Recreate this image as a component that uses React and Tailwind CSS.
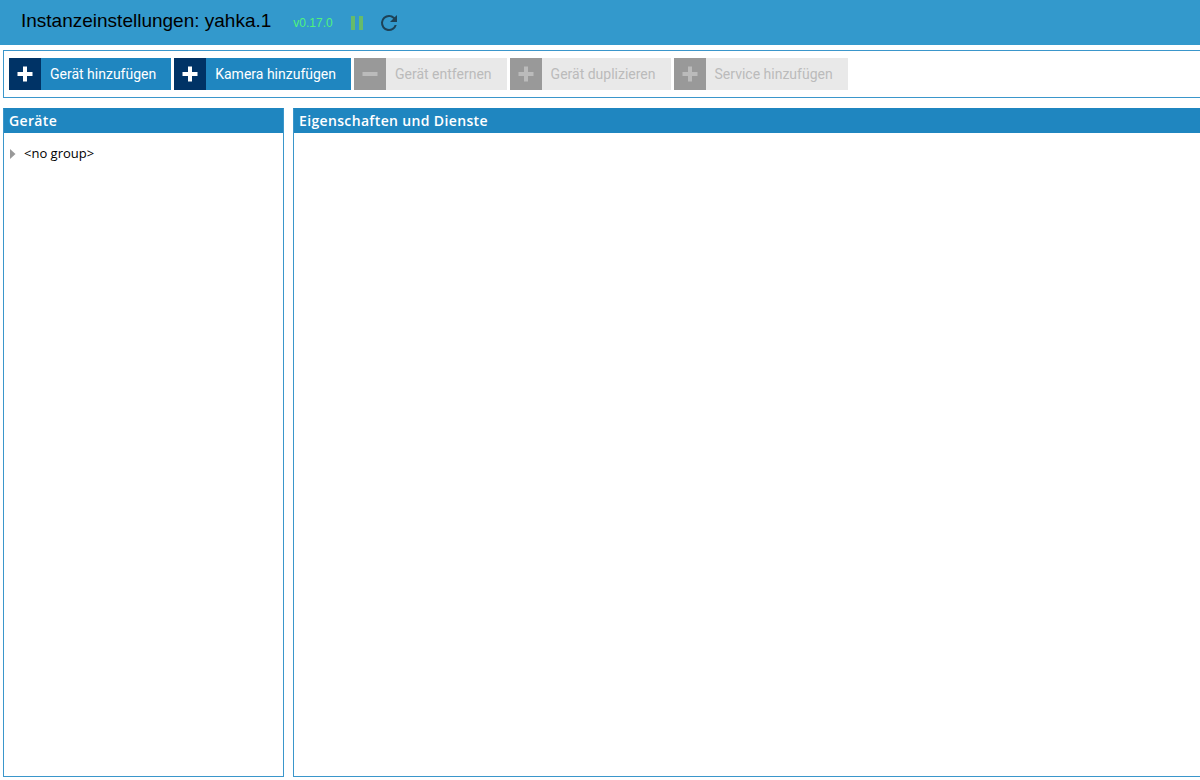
import React from "react";

const actions = [
  { label: "Gerät hinzufügen", icon: "plus", enabled: true },
  { label: "Kamera hinzufügen", icon: "plus", enabled: true },
  { label: "Gerät entfernen", icon: "minus", enabled: false },
  { label: "Gerät duplizieren", icon: "plus", enabled: false },
  { label: "Service hinzufügen", icon: "plus", enabled: false },
];

function ActionIcon({ name }) {
  return (
    <svg viewBox="0 0 16 16" className="size-4" fill="currentColor" aria-hidden="true">
      <path d={name === "plus" ? "M6 .5h4V6h5.5v4H10v5.5H6V10H.5V6H6z" : "M.5 6h15v4H.5z"} />
    </svg>
  );
}

function ActionButton({ label, icon, enabled }) {
  return (
    <button
      type="button"
      disabled={!enabled}
      className={
        enabled
          ? "flex h-8 items-center bg-[#1f86c0] text-white"
          : "flex h-8 items-center bg-[#e9e9e9] text-[#bbbbbb]"
      }
    >
      <span
        className={
          enabled
            ? "flex size-8 items-center justify-center bg-[#003366]"
            : "flex size-8 items-center justify-center bg-[#999999]"
        }
      >
        <ActionIcon name={icon} />
      </span>
      <span className="pr-[15px] pl-[9px] font-[Roboto,sans-serif] text-sm whitespace-nowrap">{label}</span>
    </button>
  );
}

function PanelHeading({ children }) {
  return (
    <h2 className="flex h-6 items-center bg-[#1f86c0] px-[5px] text-sm font-semibold tracking-wide text-white">
      {children}
    </h2>
  );
}

export default function App() {
  return (
    <div className="flex min-h-screen flex-col bg-white pb-[3px] font-['Open_Sans',sans-serif] text-black">
      <header className="flex h-[45px] items-center bg-[#3399cc] pl-[21px] font-['Liberation_Sans',sans-serif]">
        <h1 className="pb-0.5 text-[19px]">Instanzeinstellungen: yahka.1</h1>
        <span className="ml-[22px] text-xs text-[#50f27c]">v0.17.0</span>
        <button type="button" aria-label="Instanz anhalten" className="ml-[18px] text-[#66bb6a]">
          <svg viewBox="0 0 12 14" className="h-3.5 w-3" fill="currentColor" aria-hidden="true">
            <path d="M0 0h4v14H0zM8 0h4v14H8z" />
          </svg>
        </button>
        <button type="button" aria-label="Instanz neu starten" className="ml-3.5 text-[#1d4257]">
          <svg viewBox="0 0 24 24" className="size-6" fill="currentColor" aria-hidden="true">
            <path d="M17.65 6.35A7.96 7.96 0 0 0 12 4a8 8 0 1 0 7.73 10h-2.08A6 6 0 1 1 12 6c1.66 0 3.14.69 4.22 1.78L13 11h7V4z" />
          </svg>
        </button>
      </header>

      <div
        role="toolbar"
        aria-label="Aktionen"
        className="mt-[5px] ml-[3px] flex flex-wrap gap-[3px] border border-r-0 border-[#3a96cb] px-[5px] py-[7px]"
      >
        {actions.map((action) => (
          <ActionButton key={action.label} {...action} />
        ))}
      </div>

      <main className="mt-2.5 ml-[3px] flex grow gap-[9px]">
        <section className="w-[281px] shrink-0 border border-[#3a96cb] border-t-[#1f86c0]">
          <PanelHeading>Geräte</PanelHeading>
          <ul className="px-1.5 pt-[11px]">
            <li>
              <button type="button" aria-expanded="false" className="flex items-center gap-2 text-[13px]">
                <svg viewBox="0 0 6 10" className="h-2.5 w-1.5" fill="#999999" aria-hidden="true">
                  <path d="M0 0l5.5 5L0 10z" />
                </svg>
                &lt;no group&gt;
              </button>
            </li>
          </ul>
        </section>
        <section className="min-w-0 grow border border-r-0 border-[#3a96cb] border-t-[#1f86c0]">
          <PanelHeading>Eigenschaften und Dienste</PanelHeading>
        </section>
      </main>
    </div>
  );
}
